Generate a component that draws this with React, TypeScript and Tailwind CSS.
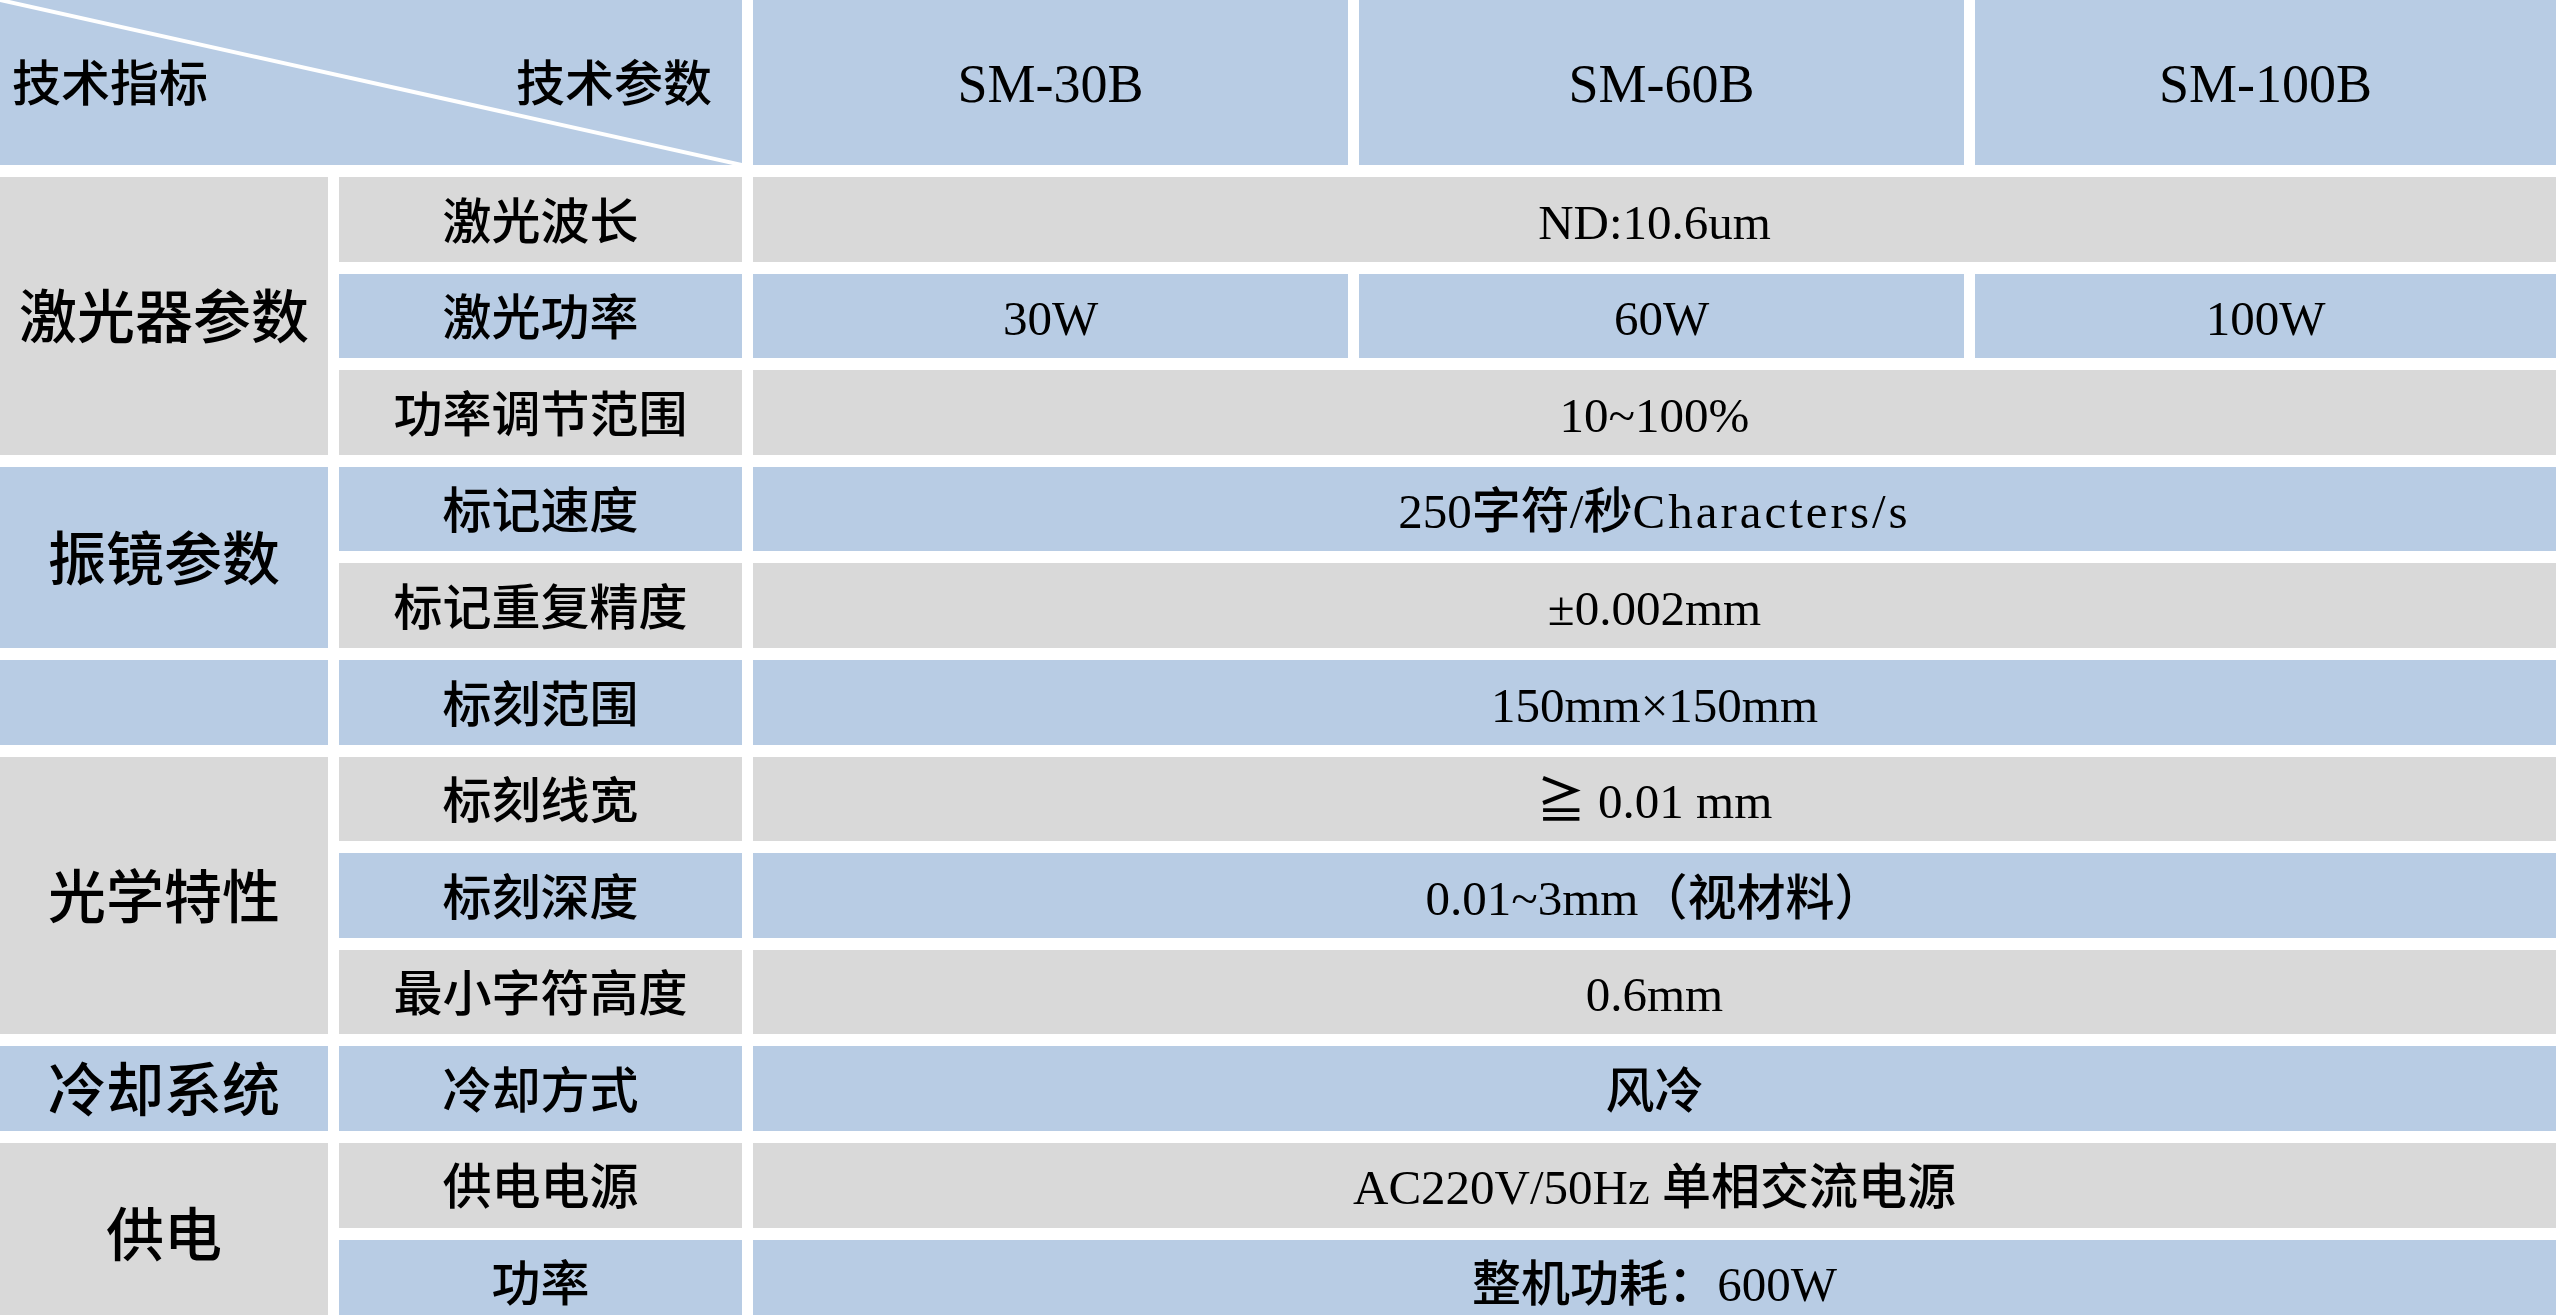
type Row = {
  label: string;
  tone: "blue" | "gray";
  values: string[];
};

type Group = {
  name: string;
  tone: "blue" | "gray";
  rows: Row[];
};

const groups: Group[] = [
  {
    name: "激光器参数",
    tone: "gray",
    rows: [
      { label: "激光波长", tone: "gray", values: ["ND:10.6um"] },
      { label: "激光功率", tone: "blue", values: ["30W", "60W", "100W"] },
      { label: "功率调节范围", tone: "gray", values: ["10~100%"] },
    ],
  },
  {
    name: "振镜参数",
    tone: "blue",
    rows: [
      { label: "标记速度", tone: "blue", values: ["250字符/秒Characters/s"] },
      { label: "标记重复精度", tone: "gray", values: ["±0.002mm"] },
    ],
  },
  {
    name: "",
    tone: "blue",
    rows: [{ label: "标刻范围", tone: "blue", values: ["150mm×150mm"] }],
  },
  {
    name: "光学特性",
    tone: "gray",
    rows: [
      { label: "标刻线宽", tone: "gray", values: ["≧ 0.01 mm"] },
      { label: "标刻深度", tone: "blue", values: ["0.01~3mm（视材料）"] },
      { label: "最小字符高度", tone: "gray", values: ["0.6mm"] },
    ],
  },
  {
    name: "冷却系统",
    tone: "blue",
    rows: [{ label: "冷却方式", tone: "blue", values: ["风冷"] }],
  },
  {
    name: "供电",
    tone: "gray",
    rows: [
      { label: "供电电源", tone: "gray", values: ["AC220V/50Hz 单相交流电源"] },
      { label: "功率", tone: "blue", values: ["整机功耗：600W"] },
    ],
  },
];

const bg = (tone: "blue" | "gray") => (tone === "blue" ? "bg-[#b8cce4]" : "bg-[#d9d9d9]");

const spans = ["row-span-1", "row-span-2", "row-span-3"];

// latin runs in the reference are a narrow monospaced serif, so give them a bit of tracking
function Text({ value }: { value: string }) {
  const parts = value.match(/[\x20-\x7e]+|[^\x20-\x7e]+/g) ?? [value];
  return (
    <>
      {parts.map((p, i) =>
        /^[\x20-\x7e]+$/.test(p) && /[a-z]{3}/i.test(p) ? (
          <span key={i} className="tracking-[3px]">
            {p}
          </span>
        ) : (
          <span key={i}>{p}</span>
        )
      )}
    </>
  );
}

export default function App() {
  let rowIndex = 2;

  return (
    <div className="w-[2556px] h-[1315px] overflow-hidden bg-white font-['Liberation_Serif','Noto_Sans_CJK_SC',serif] font-medium text-black">
      <div className="grid grid-cols-[328px_403px_595px_605px_581px] grid-rows-[165px_repeat(12,84.6px)] gap-x-[11px] gap-y-[12px]">
        {/* header */}
        <div className="relative col-span-2 flex items-center justify-between bg-[#b8cce4] pl-[12px] pr-[30px] pt-[4px] text-[49px]">
          <svg className="absolute inset-0 h-full w-full" viewBox="0 0 742 165" preserveAspectRatio="none">
            <line x1="0" y1="0" x2="742" y2="165" stroke="white" strokeWidth="4" />
          </svg>
          <span className="relative">技术指标</span>
          <span className="relative">技术参数</span>
        </div>
        {["SM-30B", "SM-60B", "SM-100B"].map((m) => (
          <div key={m} className="flex items-center justify-center bg-[#b8cce4] pt-[4px] text-[54px]">
            {m}
          </div>
        ))}

        {groups.map((g) => {
          const start = rowIndex;
          rowIndex += g.rows.length;
          return [
            <div
              key={g.name + start}
              style={{ gridRowStart: start }}
              className={`${spans[g.rows.length - 1]} col-start-1 flex items-center justify-center pt-[6px] text-[58px] ${bg(g.tone)}`}
            >
              {g.name}
            </div>,
            ...g.rows.map((r, i) => (
              <div
                key={r.label}
                style={{ gridRowStart: start + i }}
                className="col-start-2 col-span-4 grid grid-cols-subgrid text-[49px]"
              >
                <div className={`flex items-center justify-center pt-[6px] ${bg(r.tone)}`}>{r.label}</div>
                {r.values.length === 1 ? (
                  <div className={`col-span-3 flex items-center justify-center whitespace-pre pt-[6px] ${bg(r.tone)}`}>
                    <Text value={r.values[0]} />
                  </div>
                ) : (
                  r.values.map((v) => (
                    <div key={v} className={`flex items-center justify-center pt-[6px] ${bg(r.tone)}`}>
                      {v}
                    </div>
                  ))
                )}
              </div>
            )),
          ];
        })}
      </div>
    </div>
  );
}
